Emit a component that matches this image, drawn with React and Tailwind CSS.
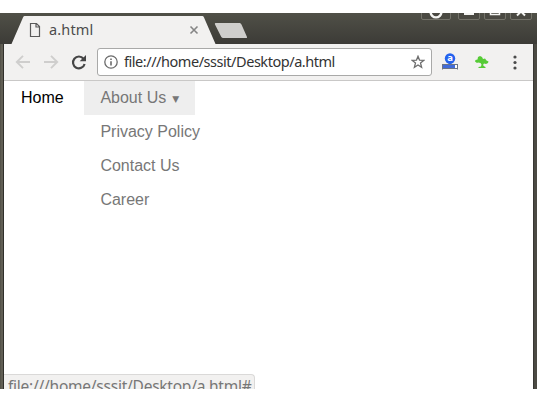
function TitleBar() {
  return (
    <header className="relative h-[31px] w-full bg-gradient-to-b from-[#505047] to-[#3c3b37]">
      <svg className="absolute inset-0" width="537" height="31" viewBox="0 0 537 31">
        <path d="M11.500 31 L23 4.500 C23.500 3.300 24 3 25.500 3 H201.500 C203 3 203.500 3.300 204 4.500 L215.500 31 Z" fill="#f2f1f0" />
        <path d="M216 10 H239 C240.500 10 241 10.500 241.700 12 L247 24 C247.200 24.700 247 25 246 25 H224 C222 25 221.500 24.500 220.800 23 L215 11.500 C214.600 10.500 215 10 216 10 Z" fill="#cfcecc" />
        <g fill="#4a4942" stroke="#74736a" strokeWidth="1">
          <rect x="421.500" y="-12" width="29" height="18.500" rx="1.500" />
          <rect x="458.500" y="-12" width="21" height="18.500" rx="1.500" />
          <rect x="484.500" y="-12" width="21" height="18.500" rx="1.500" />
          <rect x="510.500" y="-12" width="21" height="18.500" rx="1.500" />
        </g>
        <circle cx="436" cy="-1" r="5.400" fill="none" stroke="#f5f5f3" strokeWidth="2.400" />
        <rect x="464" y="0" width="10" height="2" fill="#f5f5f3" />
        <rect x="490.500" y="-6" width="9" height="7.500" fill="none" stroke="#f5f5f3" strokeWidth="1.500" />
        <path d="M517 2.500 L525 -5.500 M517 -5.500 L525 2.500" stroke="#f5f5f3" strokeWidth="2" />
        <path d="M30.500 10.500 H36.500 L39.500 13.500 V23.500 H30.500 Z M36 10.500 V14 H39.500" fill="none" stroke="#5a5a5a" strokeWidth="1.200" />
        <path d="M190.500 13.500 L197.500 20.500 M197.500 13.500 L190.500 20.500" stroke="#858585" strokeWidth="1.600" />
      </svg>
      <span className="absolute left-[49px] top-[6px] text-[14.500px] leading-[20px] tracking-[0.150px] text-[#4c4c4c]">a.html</span>
    </header>
  );
}

function Toolbar() {
  return (
    <div className="flex h-[37px] items-center border-b border-[#c9c8c7] bg-[#f2f1f0]">
      <svg className="shrink-0" width="93" height="36" viewBox="0 0 93 36">
        <g fill="none" stroke="#cfcecd" strokeWidth="1.900">
          <path d="M26 18 H13.500 M19 11.800 L12.800 18 L19 24.200" />
          <path d="M40 18 H52.500 M47 11.800 L53.200 18 L47 24.200" />
        </g>
        <path d="M79.500 14.700 A5.900 5.900 0 1 0 80.600 20" fill="none" stroke="#454545" strokeWidth="2.200" />
        <path d="M82 11 V17.300 H75.700 Z" fill="#454545" />
      </svg>
      <div className="flex h-[28px] w-[335px] shrink-0 items-center rounded-[3px] border border-[#a9a9a8] bg-white">
        <svg className="ml-[6px] shrink-0" width="14" height="14" viewBox="0 0 14 14">
          <circle cx="7" cy="7" r="6.200" fill="none" stroke="#6b6b6b" strokeWidth="1.300" />
          <path d="M6.200 3.500 H7.800 V5 H6.200 Z M6.200 6.200 H7.800 V10.500 H6.200 Z" fill="#6b6b6b" />
        </svg>
        <span className="relative -top-px ml-[6px] whitespace-nowrap text-[14.500px] leading-[20px] tracking-[-0.460px] text-[#333]">file:///home/sssit/Desktop/a.html</span>
        <svg className="ml-auto mr-[6px] shrink-0" width="14" height="14" viewBox="0 0 14 14">
          <path d="M7 1.300 L8.500 5.100 L12.700 5.400 L9.500 8 L10.600 12.200 L7 9.900 L3.400 12.200 L4.500 8 L1.300 5.400 L5.500 5.100 Z" fill="none" stroke="#6e6e6e" strokeWidth="1.300" />
        </svg>
      </div>
      <svg className="ml-[9px] shrink-0" width="18" height="18" viewBox="0 0 18 18">
        <circle cx="9" cy="5.500" r="5.200" fill="#2462ee" />
        <path d="M6.500 9.500 H11.500 L9 12 Z" fill="#2462ee" />
        <text x="9" y="8.300" textAnchor="middle" fontSize="9.500" fontWeight="700" fill="#fff">a</text>
        <rect x="2" y="12" width="12" height="3.500" fill="#416bd8" />
        <rect x="14" y="12" width="2" height="3" fill="#fff" />
        <path d="M1.500 11 V16.500 M16.500 11 V16.500 M1 11.500 H17 M1 15.500 H17" stroke="#6c7485" strokeWidth="1" fill="none" />
      </svg>
      <svg className="ml-[15px] shrink-0" width="15" height="15" viewBox="0 0 15 15">
        <path d="M4 2 L6 1 L8 2 L9 4 L11 3.500 L12.500 5.500 L14.500 6.500 L14 8 L12 9 L10 8.500 L9 10 L10 11.300 L11.500 12 V13 H4.500 V12 L7 11.500 L7.500 9.500 L6.500 8 L4 7.500 L3 8 L1 6.500 L1.500 5 L3.500 4.500 Z" fill="#56cb36" />
      </svg>
      <svg className="ml-[24px] shrink-0" width="4" height="16" viewBox="0 0 4 16" fill="#4a4a4a">
        <circle cx="2" cy="3" r="1.600" /><circle cx="2" cy="8.500" r="1.600" /><circle cx="2" cy="14" r="1.600" />
      </svg>
    </div>
  );
}

function Page() {
  return (
    <main className="relative flex-1 overflow-hidden bg-white font-['Liberation_Sans',sans-serif] text-[16px] leading-[34px]">
      <nav className="flex items-start">
        <a className="w-[80px] shrink-0 pl-[17px] text-black">Home</a>
        <div className="text-[#777]">
          <a className="flex h-[34px] w-[111px] whitespace-nowrap bg-[#eee] pl-4">
            <span className="pl-[0.400px]">About Us</span>
            <span className="ml-[6px] pt-px font-['DejaVu_Sans',sans-serif] text-[9px]">▼</span>
          </a>
          <ul className="pl-[16.400px]">
            <li>Privacy Policy</li>
            <li>Contact Us</li>
            <li>Career</li>
          </ul>
        </div>
      </nav>
      <div className="absolute left-0 top-[293px] h-[24px] w-[251px] whitespace-nowrap rounded-tr-[4px] border-r border-t border-[#dad9d8] bg-[#f2f1f0] pl-[4px] font-['Noto_Sans',sans-serif] text-[15.500px] leading-[22px] text-[#777]">
        <span className="tracking-[-0.240px]">file:///home/sssit/Desktop/a.html#</span>
      </div>
    </main>
  );
}

export default function App() {
  return (
    <div className="h-[402px] w-[537px] overflow-hidden bg-white pt-[13px] font-['Noto_Sans',sans-serif]">
      <div className="flex h-[376px] flex-col overflow-hidden">
        <TitleBar />
        <div className="flex min-h-0 flex-1">
          <div className="w-[4px] shrink-0 border-l border-r border-l-[#55534a] border-r-[#302f2b] bg-[#605e54]" />
          <div className="flex min-w-0 flex-1 flex-col">
            <Toolbar />
            <Page />
          </div>
          <div className="w-[4px] shrink-0 border-l border-[#383733] bg-[#4b4a43]" />
        </div>
      </div>
    </div>
  );
}
